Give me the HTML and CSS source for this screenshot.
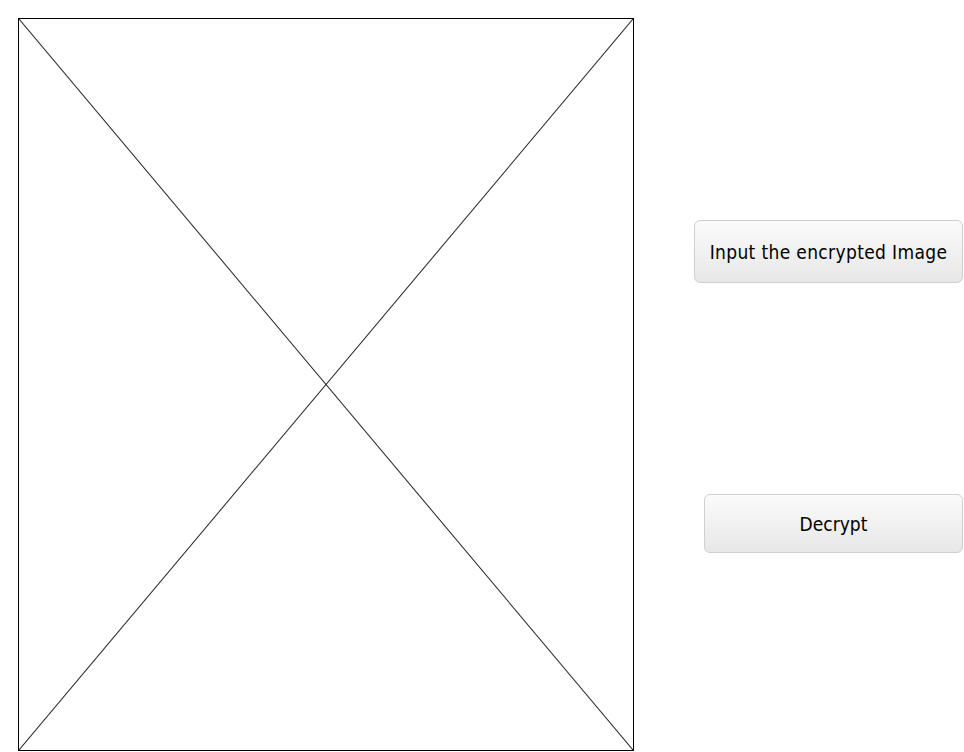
FILE: index.html
```html
<!DOCTYPE html>
<html>
<head>
<meta charset="utf-8">
<link rel="stylesheet" href="styles.css">
</head>
<body>
<div class="window">
  <div class="viewer">
    <svg class="cross" viewBox="0 0 613 731" preserveAspectRatio="none">
      <line x1="0" y1="0" x2="613" y2="731"/>
      <line x1="613" y1="0" x2="0" y2="731"/>
    </svg>
  </div>
  <div class="controls">
    <button class="btn btn-input">Input the encrypted Image</button>
    <button class="btn btn-decrypt">Decrypt</button>
  </div>
</div>
</body>
</html>
```
FILE: styles.css
```css
html, body {
  margin: 0;
  padding: 0;
  background: #fff;
}
.window {
  display: flex;
  box-sizing: border-box;
  width: 964px;
  height: 752px;
  padding: 18px 0 0 18px;
  font-family: "DejaVu Sans Condensed", "DejaVu Sans", sans-serif;
}
.viewer {
  box-sizing: border-box;
  width: 616px;
  height: 733px;
  border: 1px solid #000;
  flex: none;
}
.cross {
  display: block;
  width: 100%;
  height: 100%;
}
.cross line {
  stroke: #222;
  stroke-width: 1;
  vector-effect: non-scaling-stroke;
}
.controls {
  flex: 1;
  display: flex;
  flex-direction: column;
  align-items: flex-end;
  padding-right: 1px;
}
.btn {
  box-sizing: border-box;
  border: 1px solid #cfcfcf;
  border-radius: 6px;
  background: linear-gradient(#fbfbfb, #e7e7e7);
  color: #000;
  font-family: "DejaVu Sans Condensed", "DejaVu Sans", sans-serif;
  font-size: 19px;
  padding: 0;
}
.btn-input {
  margin-top: 202px;
  width: 269px;
  height: 63px;
  letter-spacing: 0.35px;
}
.btn-decrypt {
  margin-top: 211px;
  width: 259px;
  height: 59px;
}
```
